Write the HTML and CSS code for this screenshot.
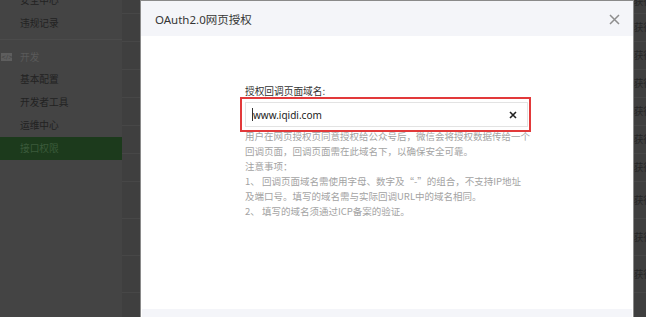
FILE: index.html
```html
<!DOCTYPE html>
<html lang="zh-CN">
<head>
    <meta charset="UTF-8">
    <title>OAuth2.0网页授权</title>
    <link rel="stylesheet" href="styles.css">
</head>
<body>
    <!-- Боковое меню (под маской) -->
    <div class="sidebar">
        <div class="menu-group">
            <div class="menu-item">安全中心</div>
            <div class="menu-item">违规记录</div>
        </div>
        <div class="menu-group menu-group-split">
            <div class="menu-title">
                <span class="menu-icon">&lt;/&gt;</span>
                开发
            </div>
            <div class="menu-item">基本配置</div>
            <div class="menu-item">开发者工具</div>
            <div class="menu-item">运维中心</div>
            <div class="menu-item active">接口权限</div>
        </div>
    </div>

    <!-- Таблица прав (под маской) -->
    <div class="content">
        <div class="perm-row short">已获得</div>
        <div class="perm-row">已获得</div>
        <div class="perm-row">已获得</div>
        <div class="perm-row">已获得</div>
        <div class="perm-row">已获得</div>
        <div class="perm-row">已获得</div>
        <div class="perm-row">已获得</div>
        <div class="perm-row tall">已获得</div>
        <div class="perm-row tall">已获得</div>
        <div class="perm-row tall">已获得</div>
    </div>

    <!-- Диалог -->
    <div class="dialog">
        <div class="dialog-header">
            <span class="dialog-title">OAuth2.0网页授权</span>
            <svg class="dialog-close" width="11" height="11" viewBox="0 0 11 11">
                <path d="M1 1 L10 10 M10 1 L1 10" stroke="#8e8e8e" stroke-width="1.5" fill="none"/>
            </svg>
        </div>
        <div class="dialog-body">
            <div class="field-label">授权回调页面域名:</div>
            <div class="field-input">
                <span class="caret"></span>
                <span class="input-value">www.iqidi.com</span>
                <svg class="input-clear" width="8" height="8" viewBox="0 0 8 8">
                    <path d="M1 1 L7 7 M7 1 L1 7" stroke="#222" stroke-width="1.6" fill="none"/>
                </svg>
            </div>
            <div class="field-help">
                用户在网页授权页同意授权给公众号后，微信会将授权数据传给一个<br>
                回调页面，回调页面需在此域名下，以确保安全可靠。<br>
                注意事项：<br>
                1、 回调页面域名需使用字母、数字及“-”的组合，不支持IP地址<br>
                及端口号。填写的域名需与实际回调URL中的域名相同。<br>
                2、 填写的域名须通过ICP备案的验证。
            </div>
        </div>
        <div class="dialog-footer"></div>
    </div>
</body>
</html>
```

FILE: styles.css
```css
* {
    margin: 0;
    padding: 0;
    box-sizing: border-box;
}

body {
    font-family: "Noto Sans CJK SC", "Noto Sans", sans-serif;
    background: #3f3f3f;
    height: 317px;
    overflow: hidden;
    position: relative;
    display: flex;
}

/* Боковое меню */
.sidebar {
    width: 122px;
    flex-shrink: 0;
    background: #444444;
    margin-top: -11px;
    font-size: 9.7px;
    color: #222222;
}

.menu-group {
    padding-bottom: 4px;
}

.menu-group-split {
    border-top: 1px solid #4b4b4b;
    padding-top: 5px;
}

.menu-item {
    height: 23px;
    line-height: 23px;
    padding-left: 20px;
}

.menu-item.active {
    background: #1c3a1c;
    color: #3b5a3b;
}

.menu-title {
    height: 23px;
    display: flex;
    align-items: center;
    gap: 8px;
    padding-left: 1px;
    color: #5a5a5a;
}

.menu-icon {
    width: 11px;
    height: 8px;
    background: #5e5e5e;
    color: #3e3e3e;
    font-size: 6px;
    line-height: 8px;
    text-align: center;
    font-family: "DejaVu Sans", sans-serif;
}

/* Таблица */
.content {
    flex: 1;
    margin-top: -10px;
    font-size: 9.7px;
    color: #262626;
}

.perm-row {
    height: 28px;
    line-height: 27px;
    padding-left: 502px;
    border-bottom: 1px solid #474747;
    white-space: nowrap;
}

.perm-row.short {
    height: 24px;
    line-height: 23px;
}

.perm-row.tall {
    height: 37px;
    line-height: 36px;
}

/* Диалог */
.dialog {
    position: absolute;
    left: 140px;
    top: 0;
    width: 494px;
    height: 360px;
    background: #ffffff;
    border: 1px solid #8a8a8a;
    display: flex;
    flex-direction: column;
}

.dialog-header {
    height: 35px;
    background: #f4f5f9;
    display: flex;
    align-items: center;
    justify-content: space-between;
    padding: 0 13px 0 14px;
}

.dialog-title {
    font-family: "Noto Sans", "Noto Sans CJK SC", sans-serif;
    font-size: 11.5px;
    color: #353535;
}

.dialog-close {
    margin-top: 1px;
}

.dialog-body {
    height: 273px;
    padding: 48px 0 0 104px;
}

.field-label {
    font-size: 9.7px;
    line-height: 15px;
    color: #333333;
    margin-bottom: 3px;
}

.field-input {
    position: relative;
    width: 283px;
    height: 25px;
    border: 1px solid #e3e3e3;
    display: flex;
    align-items: center;
    padding: 0 10px 0 6px;
}

/* Красная рамка-выделение поверх поля */
.field-input::after {
    content: '';
    position: absolute;
    top: -6px;
    bottom: -6px;
    left: -6px;
    right: -4px;
    border: 2px solid #e2393a;
}

.caret {
    width: 1px;
    height: 13px;
    background: #333333;
}

.input-value {
    flex: 1;
    font-family: "Noto Sans", sans-serif;
    font-size: 10px;
    color: #222222;
}

.field-help {
    margin-top: 2px;
    font-size: 9.5px;
    line-height: 15px;
    color: #a3a3a3;
    white-space: nowrap;
}

.dialog-footer {
    flex: 1;
    margin: 0 1px;
    background: #f4f5f9;
}
```
